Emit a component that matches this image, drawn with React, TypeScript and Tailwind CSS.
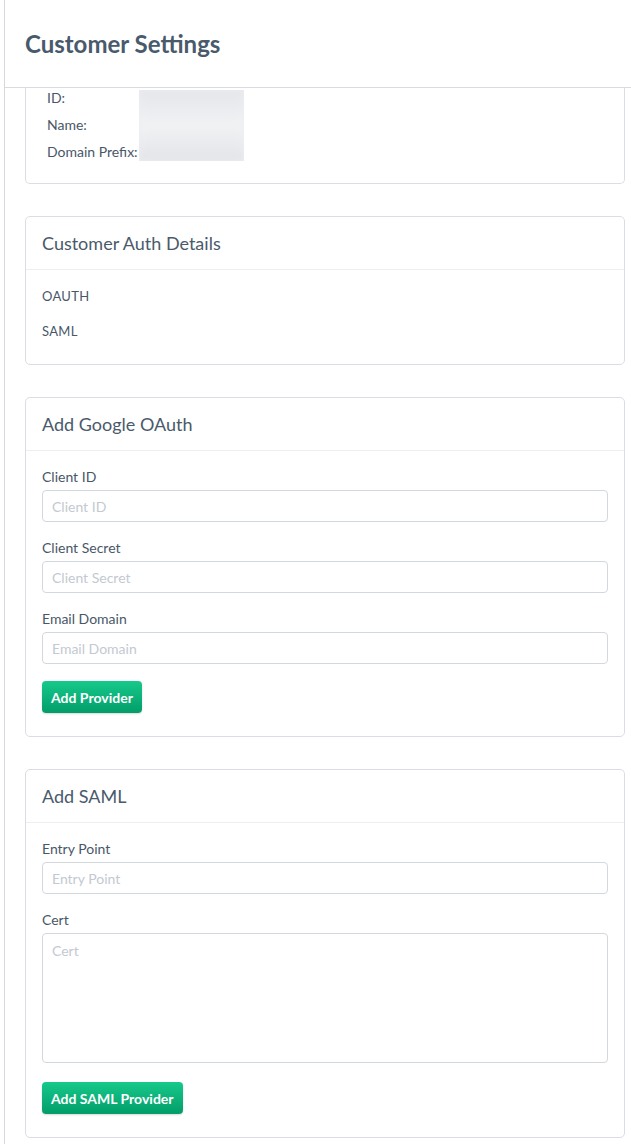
import type { ReactNode } from 'react';

const font = { fontFamily: 'Lato, "Open Sans", sans-serif' };

function Card({ title, children }: { title: string; children: ReactNode }) {
  return (
    <section className="rounded-[5px] border border-[#dadee4] bg-white">
      <header className="flex h-[53px] items-center border-b border-[#eceef1] px-4">
        <h2 className="text-[18px] text-[#4a5a6b]">{title}</h2>
      </header>
      <div className="px-4 pt-4 pb-[23px]">{children}</div>
    </section>
  );
}

function Field({ label, textarea }: { label: string; textarea?: boolean }) {
  return (
    <label className="mb-4 block last:mb-0">
      <span className="mb-[3px] block text-[14px] leading-5 text-[#485768]">{label}</span>
      {textarea ? (
        <textarea
          placeholder={label}
          className="block h-[130px] w-full resize-none rounded-[4px] border border-[#d3d8df] px-[9px] py-[6px] text-[14px] text-[#485768] outline-none placeholder:text-[#c3c9d1]"
        />
      ) : (
        <input
          placeholder={label}
          className="block h-[32px] w-full rounded-[4px] border border-[#d3d8df] px-[9px] text-[14px] text-[#485768] outline-none placeholder:text-[#c3c9d1]"
        />
      )}
    </label>
  );
}

function GreenButton({ children }: { children: ReactNode }) {
  return (
    <button className="h-[32px] rounded-[4px] bg-gradient-to-b from-[#16c98b] to-[#039d69] px-[9px] text-[14px] font-bold text-white shadow-[0_1px_2px_rgba(0,0,0,0.15)]">
      {children}
    </button>
  );
}

export default function App() {
  const info = ['ID:', 'Name:', 'Domain Prefix:'];

  return (
    <div className="min-h-[1144px] bg-white pl-1" style={font}>
      <div className="min-h-[1144px] border-l border-[#d5d9df]">
        <div className="flex h-[88px] items-center border-b border-[#d8dce2] pl-5">
          <h1 className="text-[24px] font-bold text-[#485a6b]">Customer Settings</h1>
        </div>

        <div className="flex flex-col gap-[32px] pr-[6px] pb-8 pl-5">
          {/* top of this card is scrolled under the page header */}
          <section className="overflow-hidden rounded-b-[5px] border border-t-0 border-[#dadee4] bg-white">
            <div className="-mt-[4px] flex pb-[18px] pl-[21px]">
              <div className="w-[92px]">
                {info.map((l) => (
                  <div key={l} className="flex h-[27px] items-center text-[14px] text-[#485768]">
                    {l}
                  </div>
                ))}
              </div>
              <div className="mt-[6px] h-[71px] w-[105px] overflow-hidden bg-[#eceef1]">
                <div className="h-full w-full bg-gradient-to-b from-[#e4e6ea] via-[#f1f2f4] to-[#e2e4e8] blur-[3px]" />
              </div>
            </div>
          </section>

          <Card title="Customer Auth Details">
            <p className="text-[13px] leading-5 tracking-[0.3px] text-[#485768]">OAUTH</p>
            <p className="mt-[15px] text-[13px] leading-5 tracking-[0.3px] text-[#485768]">SAML</p>
          </Card>

          <Card title="Add Google OAuth">
            <Field label="Client ID" />
            <Field label="Client Secret" />
            <Field label="Email Domain" />
            <div className="mt-[17px]">
              <GreenButton>Add Provider</GreenButton>
            </div>
          </Card>

          <Card title="Add SAML">
            <Field label="Entry Point" />
            <Field label="Cert" textarea />
            <div className="mt-[19px]">
              <GreenButton>Add SAML Provider</GreenButton>
            </div>
          </Card>
        </div>
      </div>
    </div>
  );
}
